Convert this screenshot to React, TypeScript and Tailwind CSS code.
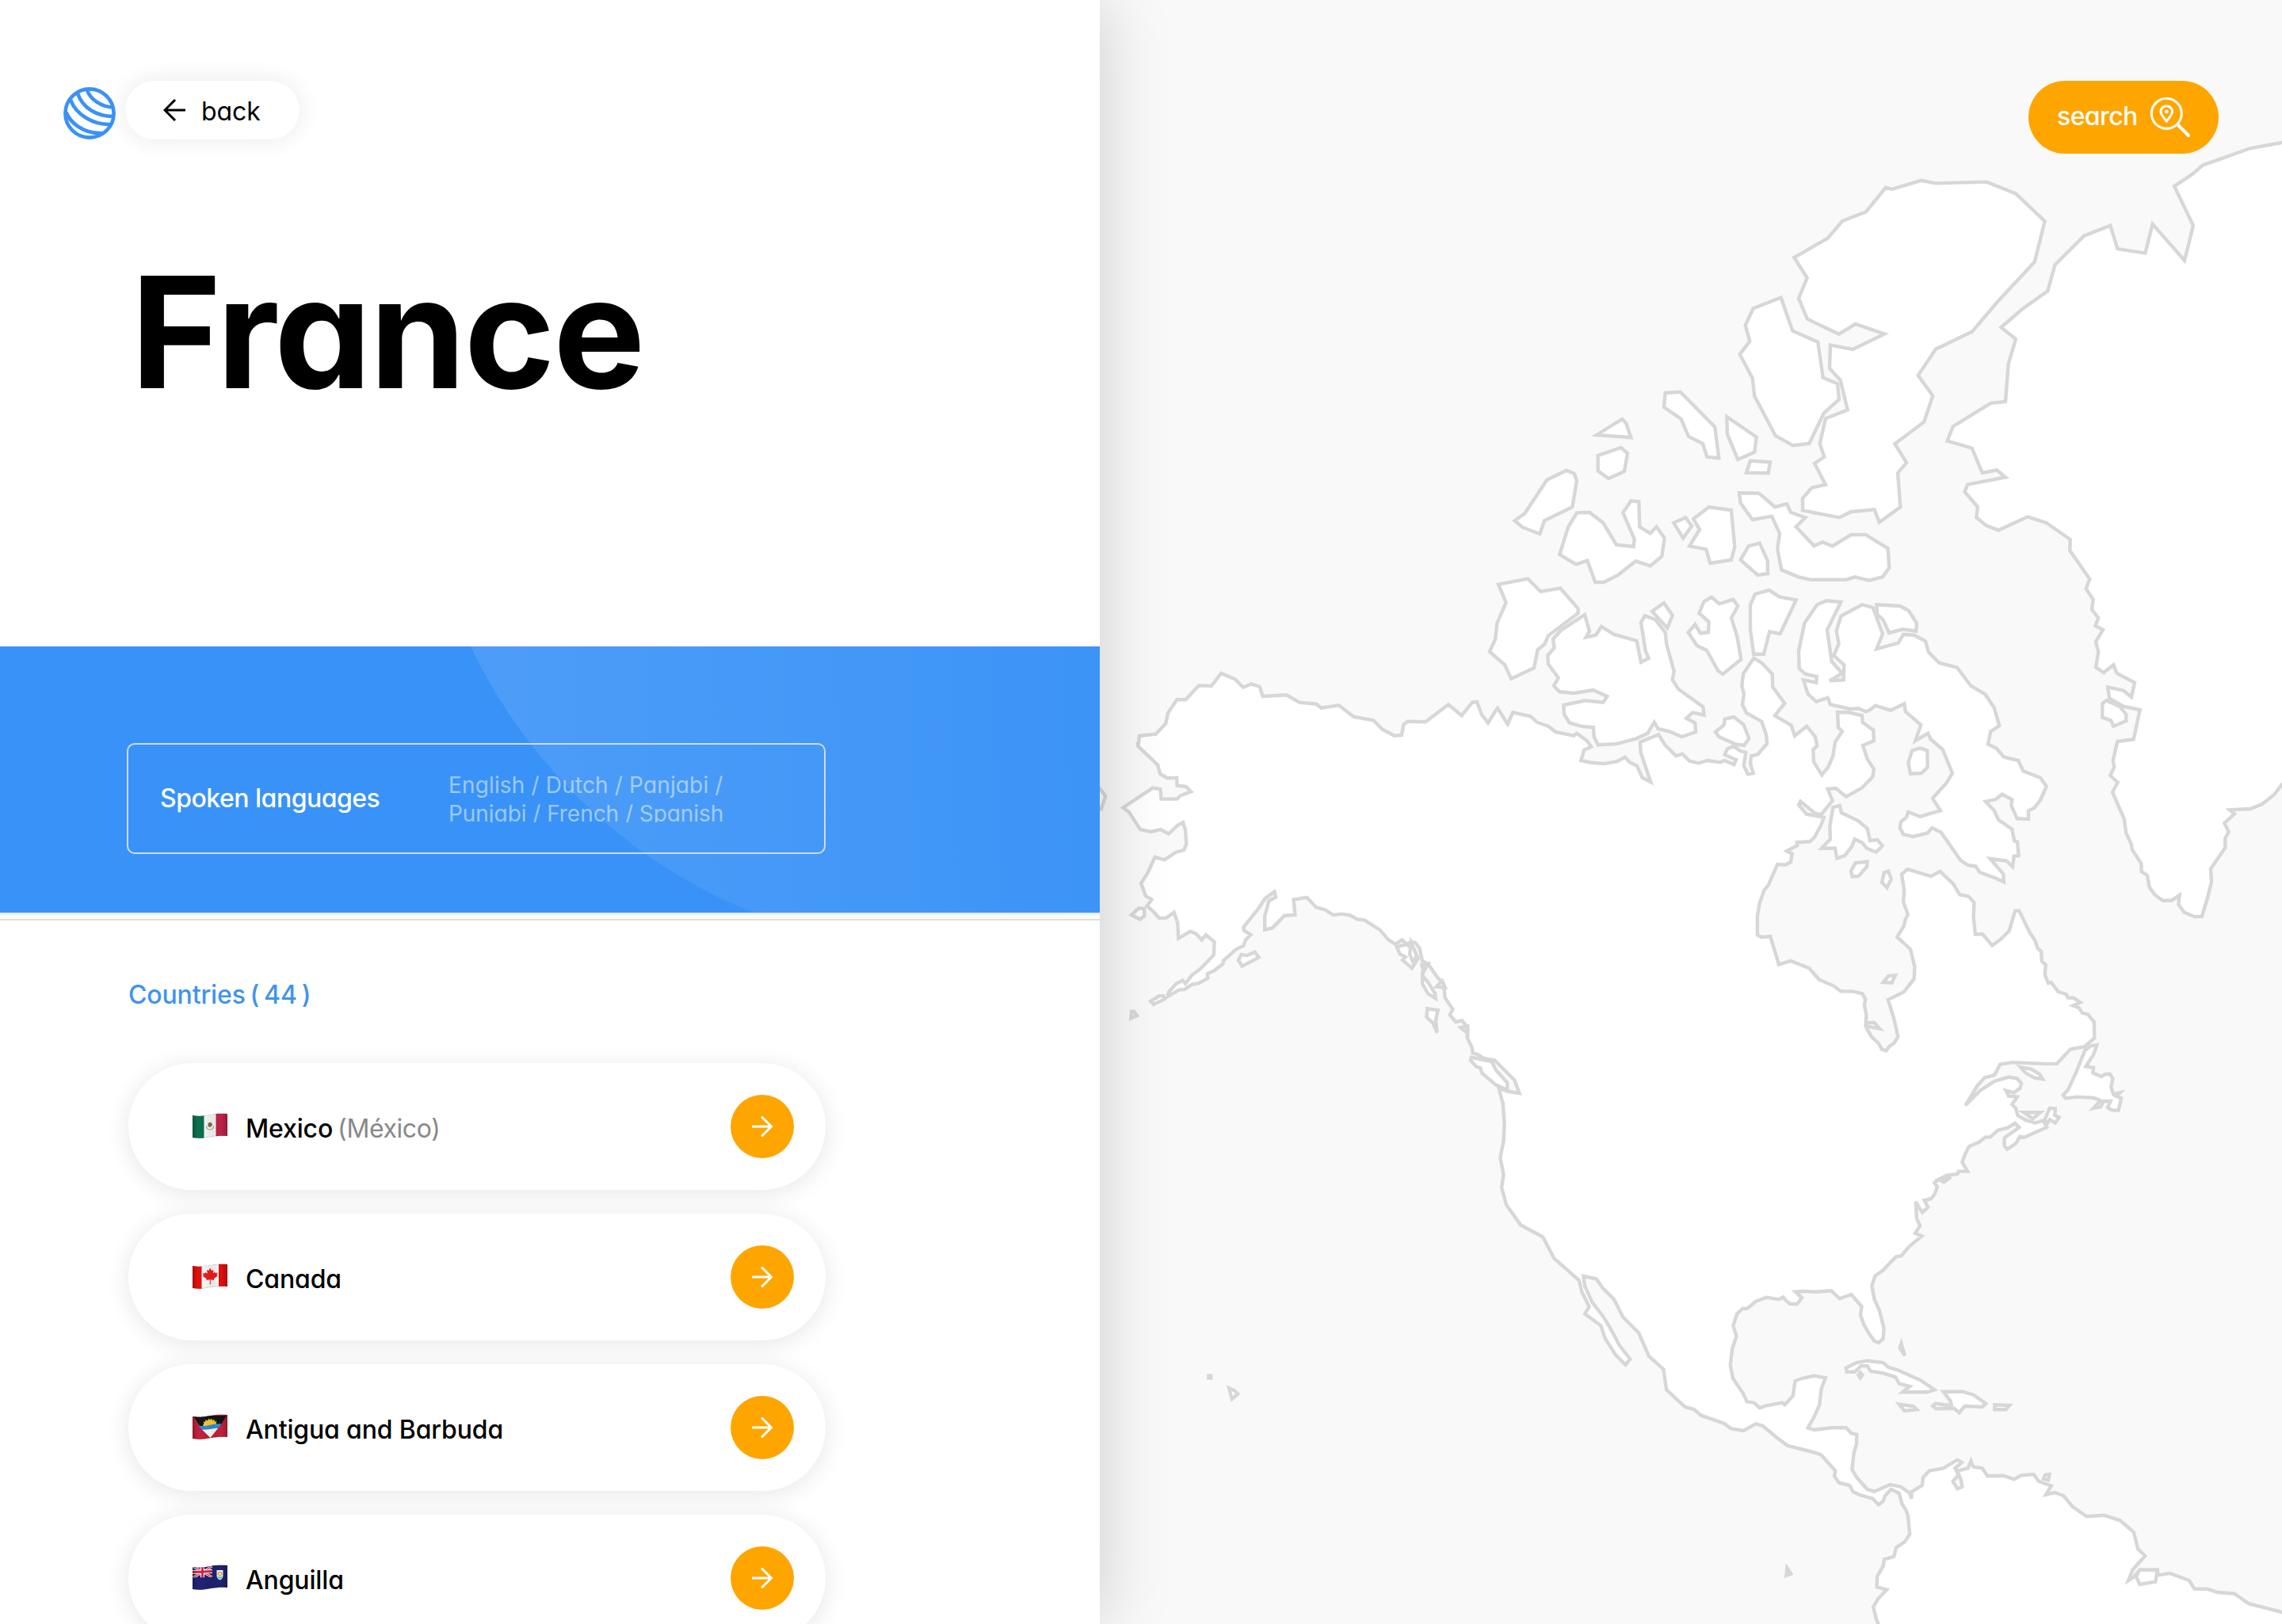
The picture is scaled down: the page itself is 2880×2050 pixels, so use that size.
import React from "react";

/* ---------- map data ---------- */

type Sheet = [number, number, number, number];

// Origin and units-per-pixel of each survey sheet.
const A: Sheet = [1388, 480, 3, 3];
const B: Sheet = [1880, 200, 3, 3];
const C: Sheet = [1880, 640, 3, 3];
const D: Sheet = [2360, 640, 3, 3];
const E: Sheet = [1388, 940, 2.8, 2.8];
const F: Sheet = [2160, 1040, 2.8, 2.8];
const G: Sheet = [2120, 1560, 2.24, 3];
const O: Sheet = [0, 0, 0.54444, 0.54444];

type Part = [Sheet, string];

const toPath = (parts: Part[]) =>
  "M" +
  parts
    .map(([[ox, oy, sx, sy], pts]) =>
      pts
        .trim()
        .split(/\s+/)
        .map((p) => {
          const [x, y] = p.split(",").map(Number);
          return `${(ox + x / sx).toFixed(1)} ${(oy + y / sy).toFixed(1)}`;
        })
        .join("L")
    )
    .join("L") +
  "Z";

const mainland: Part[] = [
  [A, "145,1388 150,1346 212,1340 250,1300 258,1260 292,1210 325,1210 375,1156 422,1158 460,1110 512,1132 543,1163 573,1150 605,1160 617,1197 707,1192 755,1220 820,1226 838,1241 905,1231 962,1275 1035,1287 1070,1322 1115,1346 1143,1344 1150,1305 1165,1292 1233,1294 1320,1228 1370,1270 1410,1220 1428,1218 1445,1265 1470,1298 1498,1253"],
  [C, "30,762 68,822 88,778 155,793 180,815 225,832 250,852 318,866 330,857 368,885 385,908 358,920 346,960 385,968 435,972 485,963 512,947 530,967 558,980 578,1025 610,1042 572,930 570,890 640,862 663,900 706,943 730,935 757,962 792,970 825,960 872,967 890,960 925,975 933,957 890,938 900,916 925,905 945,922 970,930 962,980 978,1012 998,1008 987,970 990,943 1015,937 1050,897 1048,865 1030,812 972,780 957,748 963,708 955,678 960,632 1000,572 1030,590 1070,633 1072,682 1117,743 1080,790 1142,827 1155,866 1200,830 1233,870 1240,905 1225,918 1227,965 1258,1015 1282,985 1300,943 1308,890 1335,850 1320,835 1317,777 1360,778 1410,790 1412,815 1453,845 1455,885 1413,903 1430,955 1455,993 1450,1022 1408,1065 1350,1097 1310,1065 1280,1068 1298,1112 1255,1165 1235,1162 1177,1115 1170,1128 1200,1163 1265,1175 1255,1205 1230,1250 1213,1267 1163,1270 1165,1282 1125,1303 1145,1313 1140,1345 1120,1355 1090,1353 1055,1432 1040,1450 1022,1500"],
  [F, "162,325 162,392 175,400 208,398 238,497 280,484 345,510 380,550 432,573 457,592 500,592 533,600 544,620 540,640 547,675 545,715 565,752 590,775 602,797 617,802 628,787 645,775 659,752 645,690 624,622 680,594 716,548 718,505 703,443 656,400 680,360 685,338 694,320 678,275 681,235 672,178 692,160 775,185 808,168 855,213 877,250 908,256 928,278 926,330 932,390 958,390 992,430 1022,408 1052,378 1073,307 1087,307 1125,385 1143,412 1153,440 1165,450 1167,485 1181,498 1178,533 1190,563 1200,560 1225,593 1253,602 1260,615 1280,615 1303,631 1278,642 1298,650 1310,668 1330,673 1352,700 1353,757 1318,787 1268,797 1220,848 1180,848 1062,843 1020,850 1000,888 965,897 940,925 897,995 950,942 1000,910 1050,895 1080,900 1095,917 1090,935 1068,950 1040,942 1050,962 1080,965 1062,992 1075,1005 1082,1030 1110,1047 1145,1057 1172,1048 1185,1072 1105,1108 1090,1105 1075,1130 1045,1150 1035,1138 1035,1110 1087,1073 1073,1058 1045,1075 1012,1083 985,1107 968,1107 945,1125 910,1140 895,1170 886,1197 905,1228 873,1228 870,1237 830,1243 800,1258 788,1268 798,1283 788,1310 775,1325 752,1330 765,1355 745,1373 730,1350 722,1335 725,1395 737,1420 720,1447 743,1457 712,1482 695,1498 670,1527 652,1530 615,1568"],
  [G, "575,130 552,152 543,190 550,240 565,285 577,350 575,390 562,405 550,398 535,370 520,335 511,300 514,268 485,222 452,238 428,208 385,212 350,210 327,212 345,235 332,258 312,258 300,245 292,232 280,241 245,233 215,248 190,276 178,275 162,295 151,340 160,380 148,430 143,490 150,540 178,595 190,628 210,632 226,652 245,643 290,632 297,640 320,605 326,550 345,540 380,530 412,538 400,580 395,640 378,690 362,727 380,735 430,727 470,727 485,748 500,752 500,785 492,825 487,885 500,915 530,960 550,968 595,942 625,950 650,975 655,995 655,970 685,945 688,915 705,890 745,880 785,848 797,858 778,880 788,905 772,930 785,958 798,950 795,925 785,890 815,880 823,853 830,875 855,880 870,910 915,908 945,922 965,907 1000,903 1015,930 1050,947 1035,980 1060,972 1085,985 1110,1025 1150,1063 1200,1058 1245,1078 1283,1122 1295,1185 1315,1212 1280,1265 1268,1305 1285,1290 1300,1265 1350,1265 1352,1285 1385,1278 1440,1305 1455,1337 1490,1337 1520,1350 1568,1355"],
  [O, "1545,1102 1568,1108 1600,1116 1600,1200 1290,1200"],
  [G, "570,1500 555,1450 547,1405 560,1375 585,1340 557,1330 558,1290 575,1250 578,1225 605,1215 612,1180 635,1160 650,1130 645,1060 640,1040 628,1015 620,975 597,960 580,985 575,1005 562,1018 545,995 510,982 490,970 480,945 450,935 437,910 440,890 400,830 385,822 350,810 305,795 275,765 235,720 215,712 180,738 145,730 125,710 60,680 40,657 15,648 0,630"],
  [O, "1145,955 1143,941 1133,932 1126,916 1115,905 1109,893 1101,885 1097,879 1088,877 1089,884 1094,895 1101,904 1106,912 1113,925 1120,934 1117,938 1110,931 1103,920 1100,911 1089,903 1092,898 1087,888 1085,880 1075,871 1068,865 1060,850 1045,842 1035,828"],
  [E, "1420,1565 1427,1520 1415,1460 1427,1400 1430,1340 1425,1270 1410,1215 1440,1225 1483,1232 1465,1185 1430,1150 1395,1115 1355,1108 1335,1095 1318,1090 1315,1070 1298,1035 1300,1000 1280,975 1258,980 1237,955 1247,935 1220,895 1215,845 1195,825 1160,775 1140,765 1130,720 1115,700 1100,697 1085,705 1068,690 1045,705 1020,690 990,655 935,620 910,617 885,603 855,598 825,602 795,583 765,575 732,540 685,548 690,602 653,604 610,648 583,654 583,605 592,575 597,553 622,538 617,520 585,543 560,580 508,645 510,657 533,672 515,690 508,710 480,725 437,763 435,775 405,798 380,810 382,825 350,843 325,848 300,865 280,867 240,890 243,875 270,845 293,833 303,845 325,815 355,793 403,743 405,697 375,672 360,690 340,668 320,660 278,685 275,630 262,593 235,612 210,613 188,588 167,570 183,547 162,535 146,490 170,452 195,397 228,407 270,380 297,373 306,352 302,300 294,275 275,285 243,315 215,300 180,308 143,300 103,238 82,223 187,153 214,157 217,192 273,192 285,180 322,166 305,148 273,145 272,117 238,118 213,103 205,72 135,5"],
];

const baffin: Part[] = [
  [C, "1240,370 1275,355 1330,360 1278,465 1295,585 1335,630 1287,658 1340,655 1342,598 1303,562 1322,518 1313,470 1330,413 1410,370 1450,380"],
  [D, "10,378 48,480 25,538 107,515 127,482 167,485 210,508 222,550 262,590 330,608 382,677 437,710 470,760 490,828 457,850 447,898 480,915 507,947 562,960 580,1000 645,1025 668,1058 645,1110 622,1140 600,1150 600,1182 557,1180 535,1130 538,1108 500,1088 475,1108 438,1115 470,1150 487,1185 538,1220 547,1265 558,1268 563,1320 545,1322 540,1362 517,1340 455,1332 505,1390 507,1420 470,1403 415,1383 400,1360 372,1357 343,1338 270,1233 235,1215 217,1235 163,1248 127,1240 113,1215 117,1193 138,1175 145,1155 190,1172 267,1150 237,1103 290,1045 312,1008 275,918 230,880 220,857 172,885 193,825 135,775 130,745 78,770 20,752 0,768"],
  [C, "1425,775 1397,763 1365,765 1290,748 1280,722 1237,737 1205,708 1188,655 1237,665 1238,642 1195,632 1172,612 1170,545 1192,440"],
];

const greenland: Part[] = [
  [D, "408,0 403,40 440,70 487,88 597,37 668,60 758,123 757,165 832,272 818,310 845,350 840,388 865,420 853,450 882,465 855,510 865,550 855,607 885,627 922,598 935,630 1002,665 990,720 960,695 900,682 907,725 960,755 1022,768 998,880 937,888 920,960 925,985 910,1017 938,1043 918,1080 962,1180 970,1235 990,1278 992,1297 1027,1350 1028,1380 1050,1395 1058,1440 1080,1470 1108,1490 1142,1490 1172,1470 1168,1505 1190,1535 1230,1552 1257,1550 1278,1480 1293,1420 1290,1370 1345,1290 1345,1255 1358,1230 1342,1197 1380,1162 1362,1147 1440,1143 1485,1125 1530,1090 1560,1050"],
  [O, "1600,520 1600,90 1568,98 1546,102 1513.6,113.5 1506,120 1494,128 1507,155 1501,179 1479,154 1474,174 1455,171 1450,155 1432,162 1412,182 1407,200 1390,212 1375,225 1385,233 1380,250 1378,276 1368,277 1342,293 1338,303 1355,308 1362,325 1372,323 1378,328 1352,333 1350,338"],
];

const ellesmere: Part[] = [
  [B, "1500,110 1425,202 1335,237 1280,302 1153,375 1202,452 1170,530 1203,608 1322,665 1385,627 1495,665 1375,723 1290,707 1287,795 1328,840 1355,952 1272,985 1250,1080 1267,1130 1230,1155 1272,1235 1220,1247 1185,1287 1185,1333 1325,1360 1368,1338 1457,1330 1475,1378"],
  [O, "1305.8,348.5 1304,325 1310,318 1302,305 1322,290 1328,272 1318,258 1330,240 1355,228 1372,208 1398,180 1405,152 1385,133 1365,125 1330,126 1320,124 1300,130"],
];

const devon: Part[] = [
  [B, "945,1267 1020,1268 1080,1320 1125,1308 1140,1340 1195,1360 1160,1395 1228,1467 1260,1453 1298,1468 1368,1425 1425,1425"],
  [D, "0,115 68,157 73,230 48,265 0,277"],
  [C, "1437,278 1382,265 1350,275 1215,275 1170,265 1105,238 1090,160 1098,100 1068,35 995,48 950,-15"],
];

const islands: Part[] = [
  [C, "33,293 145,272 193,320 268,308 335,385 335,402 222,487 208,520 182,540 168,610 82,650 57,597 0,548 22,500 28,440 62,362"],
  [C, "360,408 378,470 365,493 402,485 423,453 470,482 557,507 573,588 602,573 590,545 573,437 588,412 628,427 665,475 670,520 698,622 692,655 715,690 808,757 812,788 768,778 745,800 778,818 780,852 728,870 680,850 638,840 623,815 598,857 555,877 480,897 410,901 395,870 393,835 345,830 302,817 282,785 280,750 362,733 430,740 445,717 392,693 320,705 265,700 243,677 260,647 222,595 220,562 245,532 240,500 270,467"],
  [C, "615,395 660,363 692,410 673,458"],
  [C, "793,402 812,357 840,342 870,367 922,350 940,375 915,420 937,490 952,577 883,633 865,620 822,543 785,525 752,475 778,445 798,478 828,475 830,435"],
  [C, "987,370 1005,330 1058,315 1097,340 1160,352 1100,480 1060,472 1038,557 1000,557 987,465"],
  [C, "855,852 888,825 890,803 925,795 962,825 982,877 963,903 930,898 868,870"],
  [C, "265,180 298,75 330,22 378,20 430,60 480,143 545,150 548,122 505,22 535,-23 565,-20 568,75 608,100 632,75 662,118 652,187 608,223 553,205 487,257 432,285 400,285 370,203 327,217"],
  [C, "697,60 742,40 765,72 733,118"],
  [C, "772,45 830,0 915,12 928,150 915,200 835,213 820,160 757,148 795,85"],
  [C, "950,200 980,148 1022,137 1052,203 1053,252 1015,258"],
  [C, "1300,1138 1325,1130 1332,1158 1395,1188 1430,1218 1440,1263 1468,1260 1487,1283 1463,1307 1427,1292 1412,1272 1382,1258 1372,1285 1345,1320 1315,1330 1308,1292 1257,1292 1290,1258 1288,1210"],
  [C, "1385,1348 1430,1343 1428,1362 1397,1398 1373,1400 1368,1378"],
  [D, "25,370 113,375 147,393 177,440 175,470 125,463 72,477 50,427 28,408"],
  [D, "160,922 190,913 217,922 218,985 195,1008 153,1010 145,967"],
  [D, "880,745 895,733 945,755 970,785 970,810 922,830 912,808 880,797"],
  [B, "998,568 1103,527 1147,653 1243,695 1262,830 1317,853 1323,912 1265,965 1210,1080 1148,1087 1082,1050 1003,900 995,832 947,742 985,692 968,632"],
  [B, "665,888 722,884 853,1017 868,1135 823,1130 807,1080 753,1053 725,987 660,942"],
  [B, "898,978 1010,1055 1003,1112 940,1140 900,1045"],
  [B, "987,1145 1062,1150 1055,1192 972,1190"],
  [B, "405,1047 502,987 517,1003 535,1057"],
  [B, "410,1125 498,1095 522,1117 510,1185 450,1212 410,1183"],
  [B, "95,1372 133,1345 217,1217 290,1182 320,1193 330,1220 313,1320 207,1372 190,1422 125,1397"],
  [E, "-20,155 0,155 20,182 5,228 -20,228"],
  [E, "490,762 500,742 520,745 548,733 562,752 503,783"],
  [E, "138,578 157,580 158,605 142,617 112,602"],
  [E, "180,907 210,888 225,888 228,900 190,918"],
  [E, "112,943 120,943 132,958 110,967"],
  [E, "1050,715 1085,705 1110,730 1125,755 1103,790 1070,762 1080,750 1060,740"],
  [E, "1100,700 1120,745 1107,770 1095,740"],
  [E, "1138,778 1160,775 1145,802"],
  [E, "1140,815 1160,840 1185,880 1187,897 1160,880 1140,845"],
  [E, "1157,933 1195,938 1187,975 1192,1018 1178,985 1155,963"],
  [E, "1210,835 1220,858 1190,855"],
  [E, "1275,1000 1300,995 1300,1020"],
  [E, "1313,1105 1385,1120 1400,1150 1440,1195 1440,1220 1400,1203 1350,1160 1345,1143 1330,1138 1310,1115"],
  [F, "625,167 635,195 620,225 602,207 610,172"],
  [F, "607,560 625,538 650,535 637,562"],
  [F, "547,703 575,702 595,724 550,715"],
  [F, "1092,860 1130,867 1160,885 1170,902 1140,897 1110,880"],
  [F, "1103,1020 1162,1020 1135,1042"],
  [F, "1195,1005 1215,1007 1213,1030 1228,1037 1215,1057 1195,1045 1185,1060 1178,1045"],
  [F, "1362,782 1340,785 1320,800 1290,875 1260,940 1243,958 1252,970 1290,965 1350,968 1375,978 1350,1005 1375,1000 1385,980 1410,980 1400,1003 1415,1012 1438,1013 1448,970 1430,962 1443,950 1420,955 1412,930 1418,900 1408,884 1390,885 1378,893 1348,880 1350,862 1323,857 1350,815"],
  [F, "805,1258 845,1248 822,1266"],
  [G, "470,500 500,480 530,473 575,480 590,498 615,508 680,547 720,583 700,592 630,592 650,570 620,560 610,535 575,520 540,513 530,493 512,493 495,515 472,515"],
  [G, "510,518 516,527 510,538 505,527"],
  [G, "745,590 800,590 830,602 865,635 855,648 805,645 790,670 775,653 725,655 715,645 722,635 768,643 765,625"],
  [G, "620,638 660,645 670,658 635,663"],
  [G, "890,640 932,642 922,658 890,658"],
  [G, "626,408 636,454 622,425"],
  [G, "303,1258 314,1280 301,1286"],
  [G, "1033,905 1045,903 1042,925 1028,920"],
  [G, "1300,1265 1350,1265 1345,1310 1300,1320 1290,1290"],
  [O, "830.5,945.5 832,945.5 832,947 830.5,947"],
  [O, "844.5,954 848,955.5 850.5,958 846.5,961.5"],
];

const landmasses: Part[][] = [ellesmere, devon, mainland, greenland, baffin, ...islands.map((i) => [i])];

function WorldMap() {
  return (
    <svg className="block h-[2050px] w-[1492px]" viewBox="1388 0 1492 2050" aria-hidden="true">
      <g fill="#ffffff" stroke="#d7d7d7" strokeWidth={4.4}>
        {landmasses.map((parts, i) => (
          <path key={i} d={toPath(parts)} />
        ))}
      </g>
    </svg>
  );
}

/* ---------- icons ---------- */

function Logo() {
  return (
    <svg className="mt-2 size-[66px]" viewBox="0 0 66 66" fill="none" stroke="#3a92f7" strokeWidth={4.6}>
      <circle cx="33" cy="33" r="30.6" />
      <path d="M30 4C34 15 47 25 63 25.500" />
      <path d="M18 8C24 26 42 37 63 37" />
      <path d="M9 16C16 35 38 48 60 47" />
      <path d="M3.500 32C9 45 25 59 49 58" />
    </svg>
  );
}

function BackArrow() {
  return (
    <svg className="h-7 w-7" viewBox="0 0 28 28" fill="none" stroke="#000" strokeWidth={3}>
      <path d="M28 14H2M15 1 2 14l13 13" />
    </svg>
  );
}

function ForwardArrow() {
  return (
    <svg className="h-[26px] w-[26px]" viewBox="0 0 26 26" fill="none" stroke="#fff" strokeWidth={3} strokeLinecap="round">
      <path d="M1 13h23M13 1.5 24.500 13 13 24.500" />
    </svg>
  );
}

function SearchPin() {
  return (
    <svg className="h-[52px] w-[52px]" viewBox="0 0 52 52" fill="none" stroke="#fff" strokeWidth={3}>
      <circle cx="21.300" cy="21.300" r="19" />
      <path d="M35 35 49 49" strokeWidth={4} strokeLinecap="round" />
      <path d="M21.300 31C17 26 14 22.500 14 19a7.300 7.300 0 0 1 14.600 0C28.600 22.500 25.500 26 21.300 31Z" />
      <circle cx="21.300" cy="19" r="2.400" fill="#fff" stroke="none" />
    </svg>
  );
}

/* ---------- flags ---------- */

function Flag({ id, children }: { id: string; children: React.ReactNode }) {
  const wave = "M0 3C14 6 24-1 44 1V29C26 27 16 34 0 31Z";
  return (
    <svg className="h-8 w-11" viewBox="0 0 44 32">
      <defs>
        <clipPath id={id}>
          <path d={wave} />
        </clipPath>
        <linearGradient id={`${id}-shade`}>
          <stop offset="0" stopColor="#000" stopOpacity=".22" />
          <stop offset=".15" stopColor="#000" stopOpacity="0" />
          <stop offset=".6" stopColor="#000" stopOpacity=".08" />
          <stop offset=".8" stopColor="#000" stopOpacity="0" />
          <stop offset="1" stopColor="#000" stopOpacity=".2" />
        </linearGradient>
      </defs>
      <g clipPath={`url(#${id})`}>
        {children}
        <path d={wave} fill={`url(#${id}-shade)`} stroke="#000" strokeOpacity=".25" strokeWidth={1} />
      </g>
    </svg>
  );
}

const Mexico = () => (
  <Flag id="mx">
    <path fill="#fafafa" d="M0 0h44v34H0z" />
    <path fill="#0d7050" d="M0 0h14.500v34H0z" />
    <path fill="#bf2347" d="M29.500 0H44v34H29.500z" />
    <path d="M17.500 16.500a4.500 4.500 0 0 0 9 0" fill="none" stroke="#8fa67d" strokeWidth={1.200} />
    <path fill="#8a6a48" d="M19.500 13l2.500-1.500 2.500 1.500.5 2.500-3 2.500-2.500-1.300z" />
  </Flag>
);

const Canada = () => (
  <Flag id="ca">
    <path fill="#fafafa" d="M0 0h44v34H0z" />
    <path fill="#e2100e" d="M0 0h11.500v34H0zM33 0h11v34H33z" />
    <path
      fill="#f01c1a"
      d="M22 5.500l2 3.500 2.500-1-.7 4.500 2.400-2 .6 1.500 3-.4-1.200 2.900 1.200.8-5 4 .5 1.600-4.600-.6.200 6h-1.200l.2-6-4.600.8.500-1.600-5-3.800 1.200-.8-1.200-2.900 3 .4.600-1.500 2.400 1.800L18 8l2.300 1z"
    />
  </Flag>
);

const Antigua = () => (
  <Flag id="ag">
    <path fill="#c3203c" d="M0 0h44v34H0z" />
    <path fill="#151515" d="M1 2h42l-8 13H9z" />
    <path fill="#f9cf2b" d="M13 14l1.500-2-1-2.500 2.500.5.500-3 2.500 1.500L20.500 5.500 22 7.500l2-2 1 2.500 2.500-1.300.3 2.800 2.700-.5-1 2.500 1.500 2-2 2H14z" />
    <path fill="#2d8fe0" d="M7.500 14.500C16 17 27 11 36.500 12.500L31 19.500 12.500 20.500z" />
    <path fill="#fff" d="M12 19.500C19 20.500 25 17.500 32 18L22.500 30z" />
  </Flag>
);

const Anguilla = () => (
  <Flag id="ai">
    <path fill="#1f2373" d="M0 0h44v34H0z" />
    <path stroke="#fff" strokeWidth={3} d="M0 2l25 14M25 2L0 17" />
    <path stroke="#d8203e" strokeWidth={1.200} d="M0 2l25 14M25 2L0 17" />
    <path stroke="#fff" strokeWidth={5} d="M12.500 0v17M0 9.500 25 8.500" />
    <path stroke="#d8203e" strokeWidth={2.800} d="M12.500 0v17M0 9.500 25 8.500" />
    <path fill="#1f2373" d="M25 0h4v18H0v-1.500l25-.5z" />
    <path fill="#f4f4ee" d="M30.500 7h8v7c0 3-2 4.500-4 5.500-2-1-4-2.500-4-5.500z" />
    <path fill="#7cc4e2" d="M31 15h7c-.5 2-2 3.200-3.500 4-1.500-.8-3-2-3.500-4z" />
    <circle cx="34.500" cy="11.500" r="2.200" fill="none" stroke="#e2953c" strokeWidth={1.200} />
  </Flag>
);

const countries = [
  { name: "Mexico", native: "(México)", Icon: Mexico },
  { name: "Canada", native: "", Icon: Canada },
  { name: "Antigua and Barbuda", native: "", Icon: Antigua },
  { name: "Anguilla", native: "", Icon: Anguilla },
];

/* ---------- page ---------- */

export default function App() {
  return (
    <div className="flex h-[2050px] w-[2880px] overflow-hidden bg-[#f9f9f9] font-['Inter',sans-serif] text-black [font-feature-settings:'cv11']">
      <aside className="relative z-10 flex h-[2050px] w-[1388px] shrink-0 flex-col bg-white shadow-[4px_0_80px_rgba(0,0,0,0.17)]">
        <header className="h-[816px] shrink-0 pt-[102px]">
          <div className="flex gap-3 pl-20">
            <Logo />
            <button className="flex h-[74px] w-[220px] items-center rounded-full bg-white pl-12 text-[32px] leading-none shadow-[0_0_30px_rgba(0,0,0,0.09)]">
              <BackArrow />
              <span className="mt-1 ml-5 tracking-[-0.1px]">back</span>
            </button>
          </div>
          <h1 className="mt-[146px] ml-[165px] text-[195px] leading-none font-bold tracking-[-2.2px]">France</h1>
        </header>

        <section className="relative h-[336px] shrink-0 overflow-hidden bg-[#3992f7] pt-[122px] pl-40">
          <div className="absolute top-[-963px] left-[529px] size-[1348px] rounded-full bg-linear-[88deg,rgba(255,255,255,0.11),rgba(255,255,255,0)_75%]" />
          <div className="relative flex h-[140px] w-[882px] items-center rounded-[10px] border-2 border-[#ccdcf0]">
            <h2 className="w-[404px] pl-10 text-[32px] leading-none font-medium tracking-[-0.5px] text-white">
              Spoken languages
            </h2>
            <p className="mb-[5px] h-[65px] w-[360px] overflow-hidden text-[28px] leading-9 whitespace-nowrap text-white/50">
              <span className="tracking-[0.15px]">English / Dutch / Panjabi /</span>
              <br />
              <span className="tracking-[-0.05px]">Punjabi / French / Spanish</span>
            </p>
          </div>
        </section>
        <div className="h-[10px] shrink-0 border-y-2 border-t-[#dce8f4] border-b-[#dedede] bg-[#fafafa]" />

        <section className="flex min-h-0 flex-1 flex-col overflow-hidden pt-[76px] pl-[162px]">
          <h3 className="h-[104px] shrink-0 text-[32px] leading-9 font-medium tracking-[-0.15px] text-[#3f93ee] [word-spacing:-2.5px]">
            Countries ( 44 )
          </h3>
          <ul className="flex flex-col gap-[30px]">
            {countries.map(({ name, native, Icon }) => (
              <li
                key={name}
                className="flex h-40 w-[880px] shrink-0 items-center rounded-full bg-white pr-10 pl-[81px] shadow-[0_4px_30px_rgba(0,0,0,0.1)]"
              >
                <span className="mb-0.5">
                  <Icon />
                </span>
                <span className="mt-[5px] ml-[23px] text-[32px] leading-none whitespace-nowrap">
                  <span className="font-medium tracking-[-0.15px]">{name}</span>
                  {native && <span className="ml-[6px] tracking-[-0.4px] text-[#888]">{native}</span>}
                </span>
                <span className="ml-auto flex size-20 items-center justify-center rounded-full bg-[#ffa500]">
                  <ForwardArrow />
                </span>
              </li>
            ))}
          </ul>
        </section>
      </aside>

      <main className="relative h-[2050px] w-[1492px] shrink-0">
        <WorldMap />
        <button className="absolute top-[102px] right-20 flex h-[92px] w-60 items-center rounded-full bg-[#ffa500] pl-9 text-[32px] leading-none font-medium text-white">
          <span className="mb-[3px] tracking-[-0.6px]">search</span>
          <span className="mr-[35px] ml-auto">
            <SearchPin />
          </span>
        </button>
      </main>
    </div>
  );
}
